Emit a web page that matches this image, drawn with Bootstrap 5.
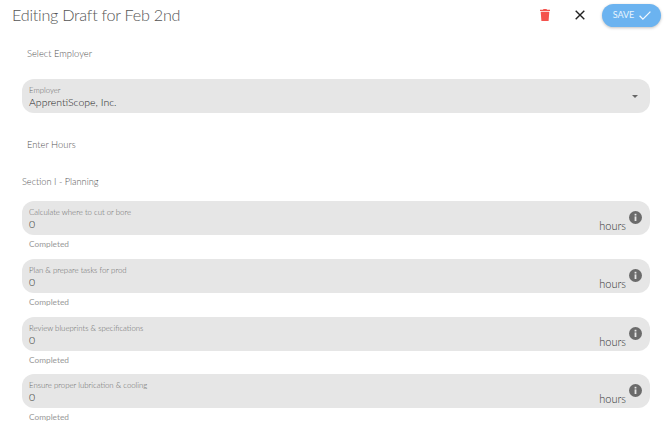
<!DOCTYPE html>
<html lang="en">
<head>
  <meta charset="UTF-8" />
  <meta name="viewport" content="width=device-width, initial-scale=1" />
  <title>Editing Draft</title>
  <link href="https://cdn.jsdelivr.net/npm/bootstrap@5.3.3/dist/css/bootstrap.min.css" rel="stylesheet" />
  <style>
    body {
      font-family: "Lato", "Open Sans", sans-serif;
      color: #333;
      background: #fff;
      height: 429px;
      overflow: hidden;
    }
    .top-bar {
      height: 30px;
      padding: 0 9px 0 12px;
    }
    .page-title {
      font-size: 16.2px;
      font-weight: 300;
      letter-spacing: -.25px;
      color: #555;
      margin: 0;
    }
    .icon-btn {
      border: 0;
      background: none;
      padding: 0;
      line-height: 0;
    }
    .trash-btn { margin-right: 25px; }
    .close-btn { margin-right: 17px; }
    .save-btn {
      width: 59px;
      height: 23px;
      border: 0;
      border-radius: 12px;
      background: #6bb3f0;
      color: #e8f3fd;
      font-size: 9px;
      box-shadow: 0 1px 3px rgba(0,0,0,.25);
      padding: 0 0 0 1px;
      gap: 5px;
    }
    .form-area { padding: 0 20px 0 22px; }
    .sub-label {
      font-size: 9.4px;
      font-weight: 300;
      color: #555;
      padding-left: 5px;
      margin: 0;
      line-height: 14px;
    }
    .section-label {
      font-size: 9.2px;
      font-weight: 300;
      color: #555;
      margin: 0;
      line-height: 14px;
    }
    .field-box {
      background: #e6e6e6;
      border-radius: 12px;
      height: 34px;
      padding: 6px 7px 0;
      position: relative;
    }
    .field-caption {
      font-size: 7.8px;
      font-weight: 300;
      line-height: 10px;
      color: #666;
    }
    .field-value {
      font-size: 10.5px;
      font-weight: 300;
      line-height: 14px;
      color: #222;
    }
    .hours-unit {
      position: absolute;
      right: 24px;
      bottom: 2px;
      font-size: 11px;
      font-weight: 300;
      line-height: 14px;
      color: #333;
    }
    .info-dot {
      position: absolute;
      right: 8.5px;
      top: 10px;
      line-height: 0;
    }
    .caret-mark {
      position: absolute;
      right: 12px;
      top: 16px;
      width: 0;
      height: 0;
      border-left: 3.5px solid transparent;
      border-right: 3.5px solid transparent;
      border-top: 3.5px solid #666;
    }
    .done-note {
      font-size: 8.3px;
      font-weight: 400;
      line-height: 12px;
      color: #999;
      padding: 3px 0 0 7px;
      height: 23.7px;
    }
  </style>
</head>
<body>
  <div class="top-bar d-flex align-items-center">
    <h1 class="page-title flex-grow-1">Editing Draft for Feb 2nd</h1>
    <button class="icon-btn trash-btn" aria-label="Delete">
      <svg width="10" height="12" viewBox="0 0 10 12"><path fill="#f4534e" d="M3.5 0h3l.5.7H10V2H0V.7h3zM.7 2.8h8.6L8.6 12H1.4z"/></svg>
    </button>
    <button class="icon-btn close-btn" aria-label="Close">
      <svg width="10" height="10" viewBox="0 0 10 10"><path stroke="#222" stroke-width="1.4" fill="none" d="M.7.7l8.6 8.6M9.3.7L.7 9.3"/></svg>
    </button>
    <button class="save-btn d-flex align-items-center justify-content-center">
      SAVE
      <svg width="12" height="9" viewBox="0 0 12 9"><path stroke="#f2f8fe" stroke-width="1.3" fill="none" d="M.6 4.8l3.3 3.3L11.4.6"/></svg>
    </button>
  </div>

  <div class="form-area">
    <p class="sub-label" style="margin-top:17px">Select Employer</p>
    <div class="field-box" style="margin-top:18px">
      <div class="field-caption">Employer</div>
      <div class="field-value">ApprentiScope, Inc.</div>
      <span class="caret-mark"></span>
    </div>
    <p class="sub-label" style="margin-top:25px">Enter Hours</p>
    <p class="section-label" style="margin-top:23px">Section I - Planning</p>

    <div id="rows" style="margin-top:12.3px"></div>
  </div>

  <script>
    const tasks = [
      "Calculate where to cut or bore",
      "Plan & prepare tasks for prod",
      "Review blueprints & specifications",
      "Ensure proper lubrication & cooling"
    ];
    const infoIcon = '<svg width="13" height="13" viewBox="0 0 13 13"><circle cx="6.5" cy="6.5" r="6.5" fill="#6b6b6b"/><rect x="5.6" y="5.4" width="1.8" height="4.6" fill="#e6e6e6"/><rect x="5.6" y="2.8" width="1.8" height="1.7" fill="#e6e6e6"/></svg>';
    const rows = document.getElementById("rows");
    tasks.forEach(function (t) {
      const box = document.createElement("div");
      box.className = "field-box";
      const cap = document.createElement("div");
      cap.className = "field-caption";
      cap.textContent = t;
      box.appendChild(cap);
      box.insertAdjacentHTML("beforeend", '<div class="field-value">0</div><span class="hours-unit">hours</span><span class="info-dot">' + infoIcon + '</span>');
      rows.appendChild(box);
      const note = document.createElement("div");
      note.className = "done-note";
      note.textContent = "Completed";
      rows.appendChild(note);
    });
  </script>
  <script src="https://cdn.jsdelivr.net/npm/bootstrap@5.3.3/dist/js/bootstrap.bundle.min.js"></script>
</body>
</html>
